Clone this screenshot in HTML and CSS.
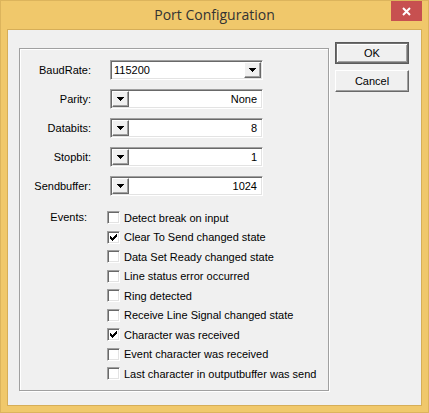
FILE: index.html
```html
<!DOCTYPE html>
<html>
<head>
<meta charset="utf-8">
<link rel="stylesheet" href="styles.css">
</head>
<body>
<div class="window">
  <div class="titlebar">
    <span></span>
    <span class="title">Port Configuration</span>
    <button class="close" aria-label="Close">
      <svg width="9" height="9" viewBox="0 0 9 9"><path d="M1 1L8 8M8 1L1 8" stroke="#fff" stroke-width="2" fill="none"/></svg>
    </button>
  </div>
  <div class="client">
    <div class="group">
      <div class="fields">
        <label class="lbl">BaudRate:</label>
        <div class="field">
          <span class="val">115200</span>
          <span class="dd"><svg width="7" height="4" viewBox="0 0 7 4"><path d="M0 0H7V1H6V2H5V3H4V4H3V3H2V2H1V1H0Z"/></svg></span>
        </div>
        <label class="lbl">Parity:</label>
        <div class="field">
          <span class="dd"><svg width="7" height="4" viewBox="0 0 7 4"><path d="M0 0H7V1H6V2H5V3H4V4H3V3H2V2H1V1H0Z"/></svg></span>
          <span class="val right">None</span>
        </div>
        <label class="lbl">Databits:</label>
        <div class="field">
          <span class="dd"><svg width="7" height="4" viewBox="0 0 7 4"><path d="M0 0H7V1H6V2H5V3H4V4H3V3H2V2H1V1H0Z"/></svg></span>
          <span class="val right">8</span>
        </div>
        <label class="lbl">Stopbit:</label>
        <div class="field">
          <span class="dd"><svg width="7" height="4" viewBox="0 0 7 4"><path d="M0 0H7V1H6V2H5V3H4V4H3V3H2V2H1V1H0Z"/></svg></span>
          <span class="val right">1</span>
        </div>
        <label class="lbl">Sendbuffer:</label>
        <div class="field">
          <span class="dd"><svg width="7" height="4" viewBox="0 0 7 4"><path d="M0 0H7V1H6V2H5V3H4V4H3V3H2V2H1V1H0Z"/></svg></span>
          <span class="val right">1024</span>
        </div>
      </div>
      <div class="events">
        <span class="ev-label">Events:</span>
        <ul class="checks">
          <li><span class="cb"></span>Detect break on input</li>
          <li><span class="cb"><svg width="7" height="7" viewBox="0 0 7 7"><path d="M6 0h1v1h-1zM5 1h2v1h-2zM0 2h1v1h-1zM4 2h3v1h-3zM0 3h2v1h-2zM3 3h3v1h-3zM0 4h5v1h-5zM1 5h3v1h-3zM2 6h1v1h-1z"/></svg></span>Clear To Send changed state</li>
          <li><span class="cb"></span>Data Set Ready changed state</li>
          <li><span class="cb"></span>Line status error occurred</li>
          <li><span class="cb"></span>Ring detected</li>
          <li><span class="cb"></span>Receive Line Signal changed state</li>
          <li><span class="cb"><svg width="7" height="7" viewBox="0 0 7 7"><path d="M6 0h1v1h-1zM5 1h2v1h-2zM0 2h1v1h-1zM4 2h3v1h-3zM0 3h2v1h-2zM3 3h3v1h-3zM0 4h5v1h-5zM1 5h3v1h-3zM2 6h1v1h-1z"/></svg></span>Character was received</li>
          <li><span class="cb"></span>Event character was received</li>
          <li><span class="cb"></span>Last character in outputbuffer was send</li>
        </ul>
      </div>
    </div>
    <div class="buttons">
      <button class="btn default">OK</button>
      <button class="btn">Cancel</button>
    </div>
  </div>
</div>
</body>
</html>
```
FILE: styles.css
```css
* { box-sizing: border-box; }
html, body { margin: 0; padding: 0; }
body {
  background: #f0c86b;
  font-family: "Liberation Sans", Arial, sans-serif;
  font-size: 11px;
  color: #000;
}
.window {
  width: 429px;
  height: 413px;
  background: #f0c86b;
  border: 1px solid #dcb45c;
  padding: 0 6px 6px 6px;
  display: flex;
  flex-direction: column;
}
.titlebar {
  height: 28px;
  display: grid;
  grid-template-columns: 1fr auto 1fr;
  align-items: start;
}
.title {
  font-family: "Open Sans", sans-serif;
  font-size: 14px;
  color: #333;
  padding-top: 5px;
  line-height: 18px;
  white-space: nowrap;
}
.close {
  justify-self: end;
  width: 31px;
  height: 20px;
  margin: 0;
  padding: 0;
  border: none;
  background: #c75050;
  display: flex;
  align-items: center;
  justify-content: center;
}
.close svg { display: block; }
.client {
  height: 377px;
  background: #f0f0f0;
  border: 1px solid #d6ae58;
  padding: 12px 12px 0 11px;
  display: flex;
  align-items: flex-start;
  gap: 6px;
}
.group {
  width: 310px;
  height: 343px;
  margin-top: 6px;
  border: 1px solid #a0a0a0;
  box-shadow: inset 1px 1px #fff, 1px 1px #fff;
  padding-top: 11px;
}
.fields {
  display: grid;
  grid-template-columns: 71px 153px;
  grid-auto-rows: 20px;
  column-gap: 19px;
  row-gap: 9px;
  align-items: center;
}
.lbl {
  text-align: right;
  white-space: nowrap;
}
.field {
  height: 20px;
  display: flex;
  align-items: stretch;
  background: #fff;
  border-top: 1px solid #a0a0a0;
  border-left: 1px solid #a0a0a0;
  border-right: 1px solid #fff;
  border-bottom: 1px solid #fff;
  box-shadow: inset 1px 1px #696969, inset -1px -1px #e3e3e3;
  padding: 1px;
}
.val {
  flex: 1;
  line-height: 16px;
  padding-left: 2px;
  white-space: nowrap;
}
.val.right {
  text-align: right;
  padding-right: 4px;
}
.dd {
  width: 17px;
  height: 16px;
  flex: none;
  background: #f0f0f0;
  border: 1px solid;
  border-color: #fff #696969 #696969 #fff;
  box-shadow: inset -1px -1px #a0a0a0;
  display: flex;
  align-items: center;
  justify-content: center;
}
.dd svg { display: block; fill: #000; margin-left: -1px; }
.events {
  display: flex;
  margin-top: 12px;
  column-gap: 20px;
}
.ev-label {
  width: 67px;
  text-align: right;
  line-height: 19.5px;
}
.checks {
  list-style: none;
  margin: 0;
  padding: 0;
}
.checks li {
  height: 19.5px;
  display: flex;
  align-items: center;
  gap: 4px;
  white-space: nowrap;
}
.cb {
  width: 13px;
  height: 13px;
  flex: none;
  background: #fff;
  border-top: 1px solid #a0a0a0;
  border-left: 1px solid #a0a0a0;
  border-right: 1px solid #fff;
  border-bottom: 1px solid #fff;
  box-shadow: inset 1px 1px #696969, inset -1px -1px #e3e3e3;
  display: flex;
  align-items: center;
  justify-content: center;
}
.cb svg { display: block; fill: #000; }
.buttons {
  display: flex;
  flex-direction: column;
  gap: 6px;
}
.btn {
  width: 74px;
  height: 22px;
  margin: 0;
  padding: 0;
  font-family: "Liberation Sans", Arial, sans-serif;
  font-size: 11px;
  color: #000;
  background: #f0f0f0;
  border: 1px solid;
  border-color: #fff #696969 #696969 #fff;
  box-shadow: inset -1px -1px #a0a0a0;
}
.btn.default {
  border: 1px solid #5a5a5a;
  box-shadow: inset 1px 1px #707070, inset -1px -1px #707070, inset 2px 2px #fff, inset -2px -2px #a0a0a0;
}
```
